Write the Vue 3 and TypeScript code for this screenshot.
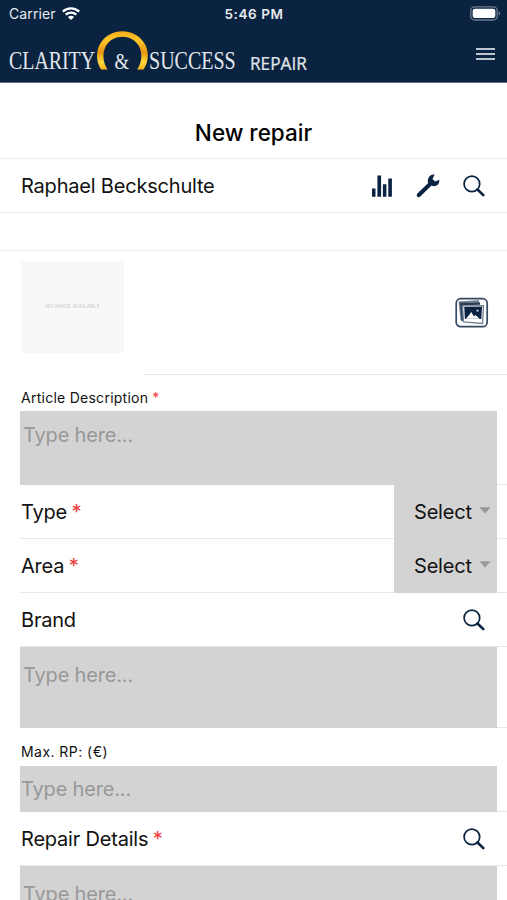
<script setup lang="ts">
import { ref } from 'vue'

const customer = ref('Raphael Beckschulte')
const selects = ['Type', 'Area']
const description = ref('')
const brand = ref('')
const maxPrice = ref('')
const details = ref('')
</script>

<template>
  <div class="screen">
    <header class="header">
      <div class="status">
        <div class="carrier">
          <span>Carrier</span>
          <svg class="wifi" width="20" height="15" viewBox="0 0 20 15">
            <path d="M1.8 5.600C6.400 1.200 13.600 1.200 18.200 5.600" />
            <path d="M4.700 8.700C7.700 5.900 12.300 5.900 15.300 8.700" />
            <path class="wifi-dot" d="M6.900 10.900C8.700 9.300 11.300 9.300 13.100 10.900L10 14Z" />
          </svg>
        </div>
        <div class="time">5:46 PM</div>
        <svg class="battery" width="31" height="15" viewBox="0 0 31 15">
          <rect x=".8" y=".8" width="26.4" height="13.2" rx="3.8" fill="none" stroke="#6c7a8d" stroke-width="1.3" />
          <rect x="2.7" y="2.7" width="22.6" height="9.4" rx="2.1" fill="#fff" />
          <path d="M28.6 5.2Q30.2 6 30.2 7.4T28.6 9.6Z" fill="#6c7a8d" />
        </svg>
      </div>
      <div class="brandbar">
        <svg class="logo" width="320" height="48" viewBox="0 0 320 48">
          <defs>
            <linearGradient id="gold" x1="0" y1="0" x2="0" y2="1">
              <stop offset="0" stop-color="#f5ad18" />
              <stop offset=".25" stop-color="#fdc62b" />
              <stop offset=".55" stop-color="#e8960f" />
              <stop offset=".8" stop-color="#ffd93c" />
              <stop offset="1" stop-color="#f2b41c" />
            </linearGradient>
          </defs>
          <path d="M101 42.500C95.600 34 95.800 22.500 101.300 15C111 .8 133.700.8 143.500 15C149.200 22.500 149.400 34 143.500 42.500H137.200C142.200 35 142.600 25.500 138.800 18.800C131.500 6.700 113.300 6.700 106 18.800C102.200 25.500 102.600 35 107.500 42.500Z" fill="url(#gold)" />
          <text class="logo-serif" transform="translate(9 42) scale(.765 1)">CLARITY</text>
          <text class="logo-serif amp" transform="translate(114.500 42) scale(.78 1)">&amp;</text>
          <text class="logo-serif" transform="translate(149 42) scale(.77 1)">SUCCESS</text>
          <text class="logo-sans" transform="translate(250 42.500) scale(.93 1)">REPAIR</text>
        </svg>
        <button class="icon-button menu" aria-label="Menu">
          <span></span><span></span><span></span>
        </button>
      </div>
    </header>

    <h1 class="title">New repair</h1>

    <section class="customer">
      <span class="customer-name">{{ customer }}</span>
      <div class="actions">
        <svg width="22" height="22" viewBox="0 0 22 22" fill="#0a2342">
          <path d="M1 13.500h3.500v8.300H1zM6.400.5h3.700v21.300H6.400zM11.900 9.300h3.500v12.500h-3.500zM17.300 3.500h3.600v18.300H17.300z" />
        </svg>
        <svg width="24" height="24" viewBox="0 0 24 24" fill="#0a2342">
          <path d="M18.600.5L16.500 5L19.200 7.600L23.200 5.700C24 10.700 19.500 13.500 15.500 11.600L4.300 22.600C2 24.500-.5 22 1.400 19.600L12 9.200C11 4.300 14-.3 18.600.5Z" />
        </svg>
        <svg class="search" width="22" height="22" viewBox="0 0 22 22">
          <circle cx="8.900" cy="8.900" r="7.800" /><path d="M14.500 14.500L20.300 20.100" />
        </svg>
      </div>
    </section>
    <div class="spacer"></div>

    <section class="photo">
      <div class="placeholder"><span>NO IMAGE AVAILABLE</span></div>
      <div class="photo-side">
        <svg width="34" height="32" viewBox="0 0 34 32">
          <rect x="1.200" y="1.700" width="31" height="28" rx="4.500" fill="#fff" stroke="#344861" stroke-width="1.700" />
          <path d="M24 4.200L4.500 5.200L6.500 23.500" fill="none" stroke="#65758a" stroke-width="1.700" />
          <path d="M25 6.500L6.500 7L8 24" fill="none" stroke="#26394f" stroke-width="2.600" />
          <path d="M7.500 9L28.500 8.700L27.500 26.500L8.500 25Z" fill="#fff" stroke="#718093" stroke-width="1.300" />
          <path d="M9.300 10L27 9.800L26.300 22L9.800 21.700Z" fill="#0a2342" />
          <path d="M11 21.700L14.500 17.500L16.300 15L19 19.500L20.500 18L24.700 21.800Z" fill="#fff" />
          <circle cx="22.500" cy="13.600" r="1.200" fill="#b9c4d0" />
        </svg>
      </div>
    </section>

    <main class="form">
      <label class="caption" for="description">Article Description <i>*</i></label>
      <div class="line description"><textarea id="description" v-model="description" placeholder="Type here..."></textarea></div>

      <div v-for="name in selects" :key="name" class="line select-row">
        <span>{{ name }} <i>*</i></span>
        <button class="select">
          <span>Select</span>
          <svg width="12" height="7" viewBox="0 0 12 7"><path d="M.3.300H11.700L6 6.500Z" fill="#999" /></svg>
        </button>
      </div>

      <div class="line search-row">
        <span>Brand</span>
        <svg class="search" width="22" height="22" viewBox="0 0 22 22">
          <circle cx="8.900" cy="8.900" r="7.800" /><path d="M14.500 14.500L20.300 20.100" />
        </svg>
      </div>
      <div class="line brand-box"><textarea v-model="brand" placeholder="Type here..."></textarea></div>

      <label class="caption price-caption" for="price">Max. RP: (€)</label>
      <div class="line price"><input id="price" v-model="maxPrice" placeholder="Type here..." /></div>

      <div class="line search-row">
        <span>Repair Details <i>*</i></span>
        <svg class="search" width="22" height="22" viewBox="0 0 22 22">
          <circle cx="8.900" cy="8.900" r="7.800" /><path d="M14.500 14.500L20.300 20.100" />
        </svg>
      </div>
      <div class="details"><textarea v-model="details" placeholder="Type here..."></textarea></div>
    </main>
  </div>
</template>

<style>
body { overflow: hidden; background: #fff; }
</style>

<style scoped>
* { box-sizing: border-box; }
.screen { width: 100%; height: 900px; overflow: hidden; background: #fff; color: #111; font-family: Inter, "Liberation Sans", sans-serif; font-size: 20px; letter-spacing: -0.2px; }
.header { height: 83px; background: #0a2340; border-bottom: 1px solid #62728a; color: #e7ebef; }
.status { display: grid; grid-template-columns: 1fr auto 1fr; align-items: center; height: 27px; padding: 0 7px 0 9px; font-size: 14px; letter-spacing: .1px; }
.carrier { display: flex; align-items: center; gap: 5px; }
.wifi { fill: none; stroke: #fff; stroke-width: 2.300; }
.wifi .wifi-dot { fill: #fff; stroke: none; }
.time { padding-right: 1px; font-size: 13.500px; font-weight: 600; letter-spacing: .55px; }
.battery { justify-self: end; margin-right: -1px; }
.brandbar { display: flex; justify-content: space-between; height: 55px; padding-right: 12px; }
.logo { display: block; }
.logo-serif { fill: #e3e8ed; font-family: "Liberation Serif", serif; font-size: 26px; letter-spacing: 0; }
.logo-serif.amp { font-size: 24px; }
.logo-sans { fill: #e3e8ed; stroke: #e3e8ed; stroke-width: .25px; font-family: "Open Sans", sans-serif; font-size: 18.500px; letter-spacing: 0; }
button { border: 0; padding: 0; background: none; color: inherit; font: inherit; letter-spacing: inherit; }
.menu { display: flex; flex-direction: column; gap: 3px; align-self: flex-start; margin-top: 21px; }
.menu span { display: block; width: 19px; height: 2px; background: #bdc5ce; }
.title { display: flex; align-items: center; justify-content: center; height: 76px; margin: 0; padding-top: 24px; border-bottom: 1px solid #ebebeb; font-size: 22.500px; font-weight: 500; letter-spacing: 0; color: #000; }
.customer { display: flex; align-items: center; justify-content: space-between; height: 54px; padding: 0 22px 0 21px; border-bottom: 1px solid #ebebeb; }
.actions { display: flex; align-items: center; gap: 23px; }
.search { fill: none; stroke: #0a2342; stroke-width: 1.700; }
.search path { stroke-width: 2.700; stroke-linecap: round; }
.spacer { height: 38px; border-bottom: 1px solid #ebebeb; }
.photo { display: flex; height: 124px; padding-left: 21px; }
.placeholder { display: flex; align-items: center; justify-content: center; width: 103px; height: 92px; margin: 10px 20px 0 0; padding-bottom: 2px; background: #f8f8f8; color: #ccc; font-size: 5.200px; letter-spacing: 0; }
.photo-side { display: flex; flex: 1; align-items: center; justify-content: flex-end; padding-right: 18px; border-bottom: 1px solid #e5e5e5; }
.form { padding-left: 20px; }
i { color: #f03939; font-style: normal; }
.select-row i, .search-row i { margin-left: -1px; }
.caption { display: flex; align-items: center; gap: 4px; height: 36px; padding: 9px 0 0 1px; font-size: 14px; letter-spacing: .26px; }
.line { border-bottom: 1px solid #e8e8e8; }
textarea, input { display: block; width: 477px; height: calc(100% + 1px); margin: 0; border: 0; border-radius: 0; outline: 0; resize: none; overflow: hidden; background: #d3d3d3; color: #111; font: inherit; line-height: 26px; letter-spacing: -.17px; }
textarea { padding: 11px 3px; }
textarea::placeholder, input::placeholder { color: #989898; opacity: 1; }
.description { height: 74px; }
.select-row { display: flex; align-items: center; justify-content: space-between; height: 54px; padding: 0 10px 0 1px; }
.select { display: flex; align-items: center; gap: 7px; width: 103px; height: 54px; padding-left: 20px; background: #d3d3d3; }
.select svg { margin-top: -3px; }
.search-row { display: flex; align-items: center; justify-content: space-between; height: 54px; padding: 0 22px 0 1px; }
.brand-box { height: 81px; }
.brand-box textarea { padding-top: 15px; }
.price-caption { height: 38px; letter-spacing: .45px; }
.price { height: 46px; }
.price input { padding: 0 1px; }
.details { height: 90px; }
.details textarea { padding-top: 15px; }
</style>
